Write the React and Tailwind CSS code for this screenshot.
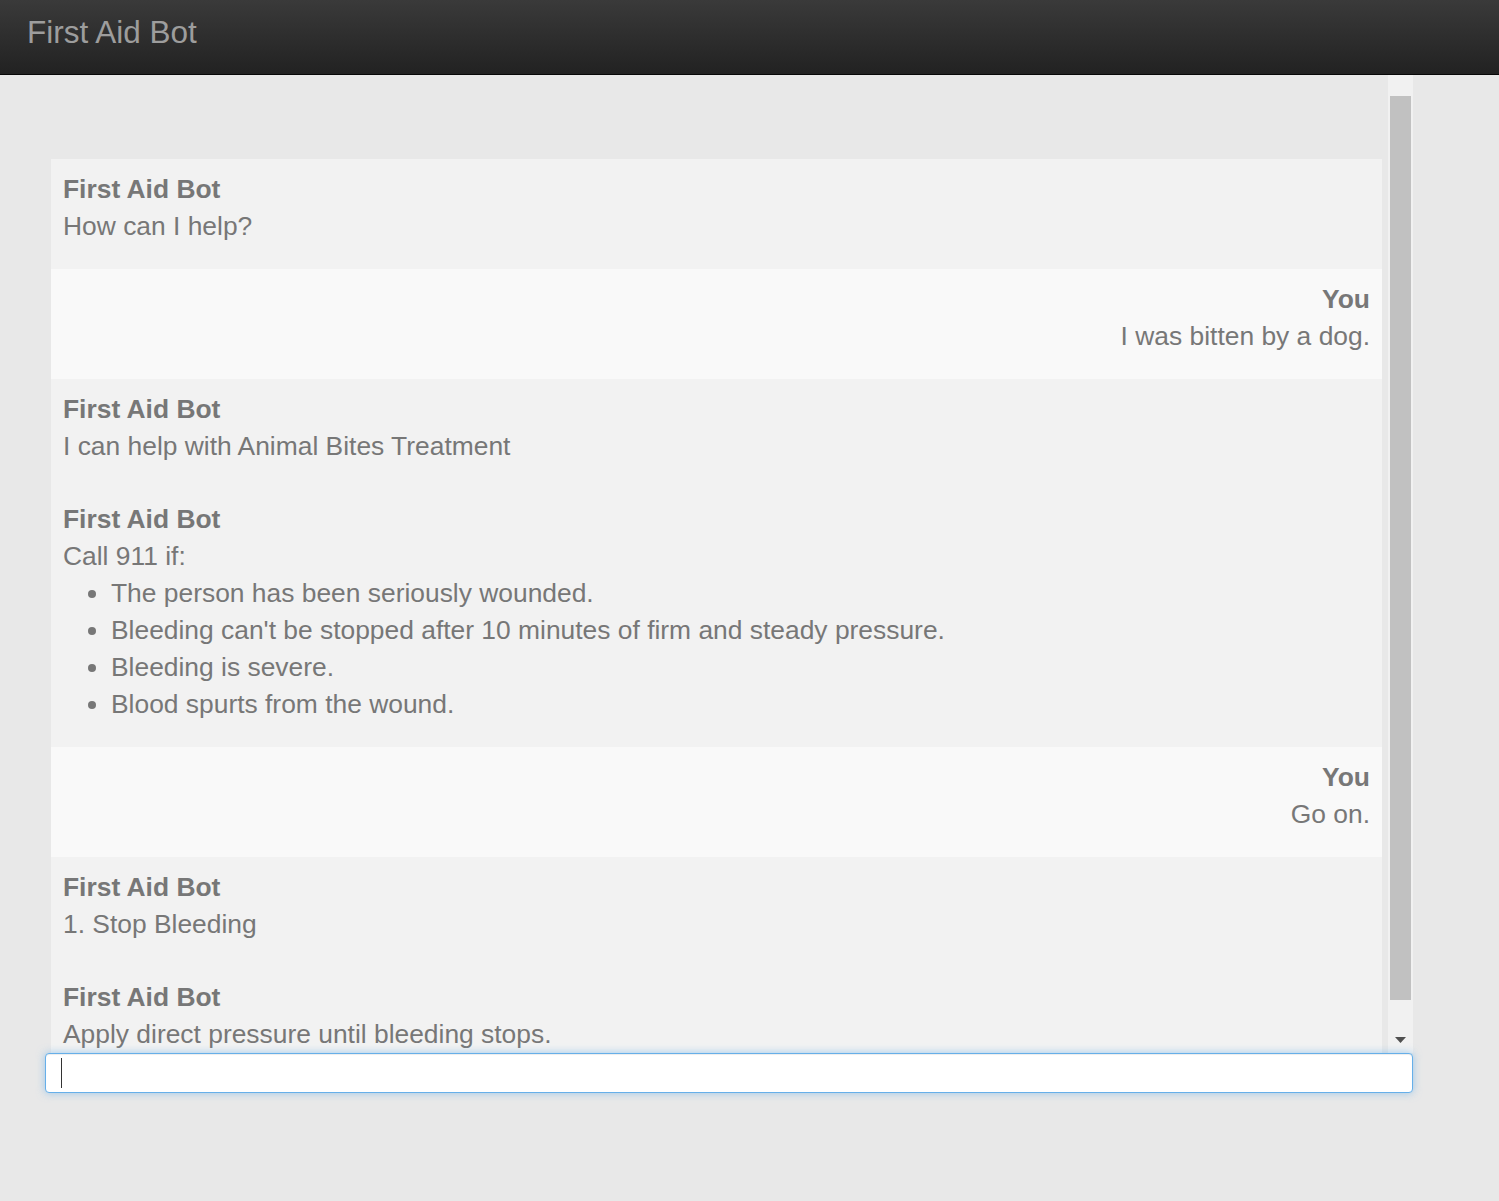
import React from 'react';

const messages = [
    { from: 'bot', name: 'First Aid Bot', text: 'How can I help?' },
    { from: 'you', name: 'You', text: 'I was bitten by a dog.' },
    { from: 'bot', name: 'First Aid Bot', text: 'I can help with Animal Bites Treatment' },
    {
        from: 'bot',
        name: 'First Aid Bot',
        text: 'Call 911 if:',
        list: [
            'The person has been seriously wounded.',
            "Bleeding can't be stopped after 10 minutes of firm and steady pressure.",
            'Bleeding is severe.',
            'Blood spurts from the wound.',
        ],
    },
    { from: 'you', name: 'You', text: 'Go on.' },
    { from: 'bot', name: 'First Aid Bot', text: '1. Stop Bleeding' },
    { from: 'bot', name: 'First Aid Bot', text: 'Apply direct pressure until bleeding stops.' },
];

const Message = ({ msg }) => {
    const isYou = msg.from === 'you';
    return (
        <div className={`pl-[12px] pr-[12px] pt-[12px] pb-[24px] shrink-0 ${isYou ? 'bg-[#f9f9f9] text-right' : 'bg-[#f2f2f2] text-left'}`}>
            <div className="font-bold">{msg.name}</div>
            <div>{msg.text}</div>
            {msg.list && (
                <ul className="list-disc pl-[48px]">
                    {msg.list.map((item) => (
                        <li key={item}>{item}</li>
                    ))}
                </ul>
            )}
        </div>
    );
};

export default function App() {
    return (
        <div className="min-h-[1201px] bg-[#e8e8e8] font-['Liberation_Sans',Arial,sans-serif]">
            {/* navbar */}
            <header className="h-[75px] bg-gradient-to-b from-[#3a3a3a] to-[#222222] border-b border-[#080808] flex items-center pl-[27px]">
                <span className="text-[31.5px] text-[#9d9d9d] leading-none pb-[8px]">First Aid Bot</span>
            </header>

            <div className="w-[1368px] ml-[45px]">
                {/* chat log */}
                <div className="flex h-[978px]">
                    <div className="flex-1 overflow-hidden px-[6px]">
                        <div className="flex flex-col pt-[84px] text-[26.4px] leading-[37px] text-[#777777]">
                            {messages.map((m, i) => (
                                <Message key={i} msg={m} />
                            ))}
                        </div>
                    </div>
                    {/* scrollbar */}
                    <div className="w-[25px] bg-[#f1f1f1] flex flex-col items-center">
                        <div className="h-[21px]" />
                        <div className="w-[21px] h-[904px] bg-[#c1c1c1]" />
                        <div className="flex-1 flex items-end pb-[10px]">
                            <svg width="11" height="6" viewBox="0 0 11 6">
                                <path d="M0 0H11L5.5 6Z" fill="#505050" />
                            </svg>
                        </div>
                    </div>
                </div>

                {/* input */}
                <div className="relative h-[40px] bg-white border border-[#66afe9] rounded-[4px] shadow-[inset_0_1px_1px_rgba(0,0,0,0.075),0_0_8px_rgba(102,175,233,0.6)]">
                    <input className="w-full h-full bg-transparent outline-none px-[16px] text-[26px] text-[#555]" />
                    <span className="absolute left-[15px] top-[4px] w-[1px] h-[30px] bg-[#333]" />
                </div>
            </div>
        </div>
    );
}
